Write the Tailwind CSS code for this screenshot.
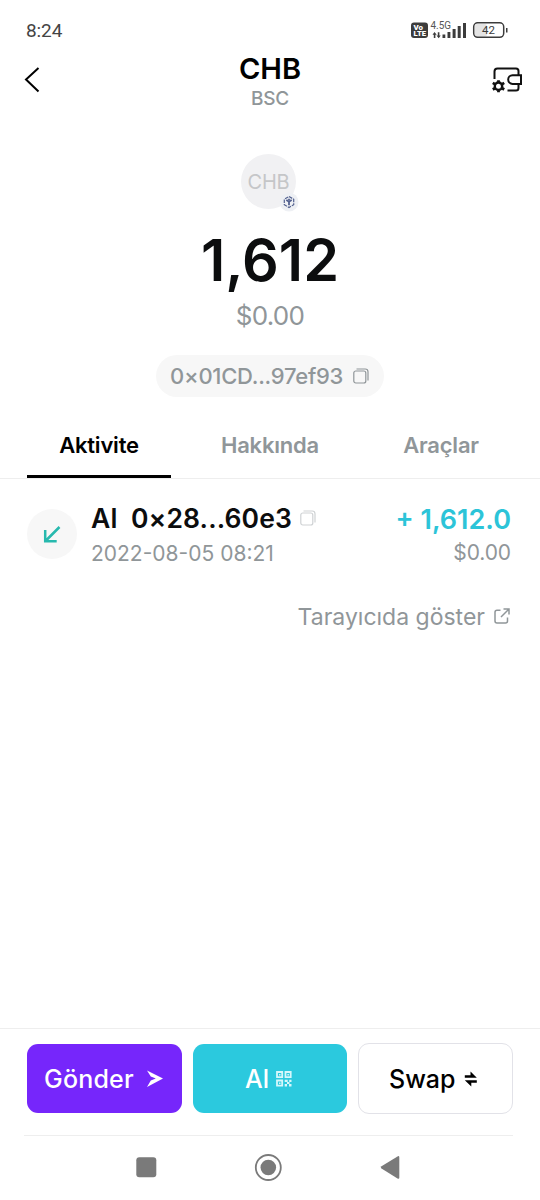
<!DOCTYPE html>
<html lang="tr">
<head>
<meta charset="utf-8">
<title>CHB</title>
<script src="https://cdn.jsdelivr.net/npm/@tailwindcss/browser@4"></script>
</head>
<body class="bg-white">
<div class="flex h-[1200px] w-[540px] flex-col overflow-hidden bg-white font-['Inter',sans-serif] text-black whitespace-nowrap">

  <!-- Status bar -->
  <div class="flex h-[52px] shrink-0 items-start justify-between pt-[19px] pr-[31px] pl-[26px]">
    <span class="font-['Roboto',sans-serif] text-[19px] leading-6 tracking-[-0.1px] text-[#444]">8:24</span>
    <svg class="h-6 w-[100px]" viewBox="409 19 100 24" fill="#3c3c3c">
      <rect x="411" y="22.500" width="17" height="15.500" rx="3"/>
      <g fill="#fff" font-family="Roboto" font-weight="900">
        <text x="413.500" y="29.800" font-size="7" textLength="9.500" lengthAdjust="spacingAndGlyphs">Vo</text>
        <text x="413.500" y="36.400" font-size="7" textLength="12.500" lengthAdjust="spacingAndGlyphs">LTE</text>
      </g>
      <text x="430.500" y="28.600" font-family="Roboto" font-size="10" textLength="20.500" lengthAdjust="spacingAndGlyphs" fill="#555">4.5G</text>
      <path d="M434.500 32l2.200 2.800h-1.300v3.200h-1.600v-3.200h-1.300zM438.700 38.200l-2.200-2.800h1.300v-3.200h1.600v3.200h1.300z"/>
      <path d="M442.500 34.500h2.800V38h-2.800zM447.500 32h2.900v6h-2.900zM452.600 29h3v9h-3zM457.700 26h3v12h-3zM463 23h3v15h-3z"/>
      <rect x="475" y="24" width="12" height="12.500" rx="2" fill="#e4e4e4"/>
      <rect x="473.700" y="22.800" width="30" height="14.500" rx="4" fill="none" stroke="#3c3c3c" stroke-width="1.500"/>
      <path d="M506 28h1.500v4.500H506z"/>
      <text x="482" y="34.300" font-family="Roboto" font-size="11.500" textLength="13">42</text>
    </svg>
  </div>

  <!-- Header -->
  <div class="flex h-[64px] shrink-0 items-start justify-between pr-[17px] pl-[23px]">
    <svg class="mt-[14px] h-7 w-7" viewBox="23 66 28 28" fill="none" stroke="#000" stroke-width="2"><path d="M38.500 68L26 79.500 38.500 91.500"/></svg>
    <div class="flex flex-col items-center pr-[2px]">
      <h1 class="text-[29px] leading-[34px] font-semibold">CHB</h1>
      <p class="pt-px text-[19px] leading-6 font-medium tracking-[-0.2px] text-[#909699]">BSC</p>
    </div>
    <svg class="mt-[13px] h-7 w-8" viewBox="491 65 32 28" fill="none" stroke="#111" stroke-width="2">
      <path d="M494.500 79V71.500q0-3 3-3h18.500q2.500 0 2.500 2.500v4M507.500 90.500h8.500q2.500 0 2.500-2.500v-4"/>
      <path d="M521 75.300h-8.500a4.200 4.200 0 0 0 0 8.600h8.500z"/>
      <circle cx="498.500" cy="86.200" r="3.700" stroke-width="2.400"/>
      <path stroke-width="2.800" d="M498.500 80.200v2M498.500 90.200v2M492.800 82.900l2 1.200M502.200 88.300l2 1.200M492.800 89.500l2-1.200M502.200 84.100l2-1.200"/>
    </svg>
  </div>

  <!-- Balance -->
  <div class="flex h-[302px] shrink-0 flex-col items-center pt-[38px]">
    <div class="relative mr-[3px] flex h-[55px] w-[55px] items-center justify-center rounded-full bg-[#f1f1f3] pt-px text-[20px] tracking-[-0.2px] text-[#c5c6c8]">
      CHB
      <svg class="absolute top-[38px] left-[38px] h-5 w-5" viewBox="0 0 20 20" fill="none" stroke="#53618f">
        <circle cx="10" cy="10" r="9.500" fill="#eef0f4" stroke="none"/>
        <path stroke-width="1.200" stroke-dasharray="3.700 1" d="M10 4.500l4.700 2.750v5.500L10 15.500l-4.700-2.750v-5.500z"/>
        <path stroke-width="1.800" d="M7.300 8L10 9.600 12.700 8M10 9.600v3.600M10 6.700v1.200"/>
      </svg>
    </div>
    <div class="mt-[17px] text-[57.500px] leading-[68px] font-semibold text-[#0c0d0e]">1,612</div>
    <div class="mt-[6px] text-[26px] leading-8 tracking-[-0.700px] text-[#909699]">$0.00</div>
    <div class="mt-[23px] flex h-[42px] w-[228px] items-center rounded-full bg-[#f7f7f7] pl-[14px]">
      <span class="w-[183px] text-[22px] font-medium tracking-[-0.250px] text-[#909699]">0×01CD...97ef93</span>
      <svg class="h-4 w-4" viewBox="0 0 16 16" fill="none" stroke="#909699" stroke-width="1.200"><rect x=".8" y="3" width="12" height="12" rx="2"/><path d="M3.500 1h8.700q2.800 0 2.800 2.800v8.700"/></svg>
    </div>
  </div>

  <!-- Tabs -->
  <div class="flex h-[61px] shrink-0 border-b border-[#eee] px-[27px] text-[22px] leading-[54px] font-semibold tracking-[-0.200px] text-[#909699]">
    <div class="h-[60px] w-[144px] border-b-[3px] border-black text-center text-black">Aktivite</div>
    <div class="ml-[27px] w-[144px] text-center">Hakkında</div>
    <div class="ml-[27px] w-[144px] text-center">Araçlar</div>
  </div>

  <!-- Activity row -->
  <div class="flex h-[108px] shrink-0 pt-[22px] pr-[29px] pl-[27px]">
    <div class="mt-[8px] flex h-[50px] w-[50px] items-center justify-center rounded-full bg-[#f7f7f7]">
      <svg class="h-5 w-5" viewBox="0 0 20 20" fill="none" stroke="#27b9ae" stroke-width="2.500"><path d="M17.500 3L4 16.500M3.200 6v11.300h11.500"/></svg>
    </div>
    <div class="ml-[14px] flex flex-col">
      <div class="flex h-[34px] items-center">
        <span class="w-[209px] pt-[2px] text-[26.500px] font-semibold tracking-[0.100px] whitespace-pre text-[#0c0d0e]">Al  0×28...60e3</span>
        <svg class="h-4 w-4" viewBox="0 0 16 16" fill="none" stroke="#cfd2d4" stroke-width="1.200"><rect x=".8" y="3" width="12" height="12" rx="2"/><path d="M3.500 1h8.700q2.800 0 2.800 2.800v8.700"/></svg>
      </div>
      <span class="pt-px text-[21px] leading-[35px] text-[#909699]">2022-08-05 08:21</span>
    </div>
    <div class="ml-auto flex flex-col items-end">
      <span class="text-[27px] leading-[37px] font-semibold text-[#2cc4d8]">+ 1,612.0</span>
      <span class="text-[21px] leading-[30px] tracking-[-0.100px] text-[#909699]">$0.00</span>
    </div>
  </div>

  <div class="flex h-[60px] shrink-0 items-center justify-end pr-[30px]">
    <span class="text-[23px] text-[#909699]">Tarayıcıda göster</span>
    <svg class="mb-[2px] ml-[9px] h-4 w-4" viewBox="0 0 16 16" fill="none" stroke="#909699" stroke-width="1.500"><path d="M6.500 2.200H3Q1 2.200 1 4.200V13q0 2 2 2h8.500q2 0 2-2V9.500M9.500 1H15v5.500M15 1L7 9"/></svg>
  </div>

  <!-- Actions -->
  <div class="mt-auto flex h-[107px] shrink-0 gap-[11px] border-t border-[#eee] px-[27px] pt-[14px] text-[25px] font-medium">
    <div class="mt-px flex h-[69px] w-[155px] items-center rounded-[11px] bg-[#7626fb] pl-[17px] text-white">
      <span class="w-[103px] pt-[3px] tracking-[0.200px]">Gönder</span>
      <svg class="h-[18px] w-4" viewBox="0 0 16 18" fill="#fff"><path d="M0 .5L16 8.500 0 17l3.800-6.400 5-2-5-2z"/></svg>
    </div>
    <div class="mt-px flex h-[69px] w-[154px] items-center rounded-[11px] bg-[#2bc9de] pl-[52px] text-white">
      <span class="w-[31px] pt-[3px]">Al</span>
      <svg class="h-4 w-4" viewBox="0 0 16 16" fill="none" stroke="#d6f7fb" stroke-width="1.800"><path d="M1 1h5.200v5.200H1zM9.500 1h5.200v5.200H9.500zM1 9.500h5.200v5.200H1z"/><path fill="#d6f7fb" stroke="none" d="M3 3h1.500v1.500H3zM11.400 3h1.500v1.500h-1.500zM3 11.400h1.500v1.500H3zM8.700 8.700h3v2.200h-3zM13.200 8.700h2.300V11h-2.300zM11 11h2.500v2H11zM8.700 13H11v2.500H8.700zM13 13h2.500v2.500H13z"/></svg>
    </div>
    <div class="flex h-[71px] w-[155px] items-center rounded-[11px] border border-[#e2e2e8] pl-[30px]">
      <span class="w-[75px] pt-[3px]">Swap</span>
      <svg class="h-4 w-[14px]" viewBox="0 0 14 16" fill="#000"><path d="M.8 4.200h5.700V.5L12.800 6.700H.8zM12.800 11.800H7.300V15.500L.8 9.300H12.800z"/></svg>
    </div>
  </div>

  <!-- Navigation bar -->
  <div class="mr-[27px] ml-[24px] h-[65px] shrink-0 border-t border-[#eee]">
    <svg class="h-16 w-[489px]" viewBox="24 1136 489 64" fill="#7a7a7a">
      <rect x="136.300" y="1157.300" width="20" height="20" rx="3"/>
      <circle cx="268.300" cy="1167.500" r="12.500" fill="none" stroke="#7a7a7a" stroke-width="1.800"/>
      <circle cx="268.300" cy="1167.500" r="7.800"/>
      <path d="M381.500 1166.300L397.500 1156.400q1.800-1 1.800 1v20q0 2-1.800 1L381.500 1168.500q-1.500-1.100 0-2.200z"/>
    </svg>
  </div>
</div>
</body>
</html>
